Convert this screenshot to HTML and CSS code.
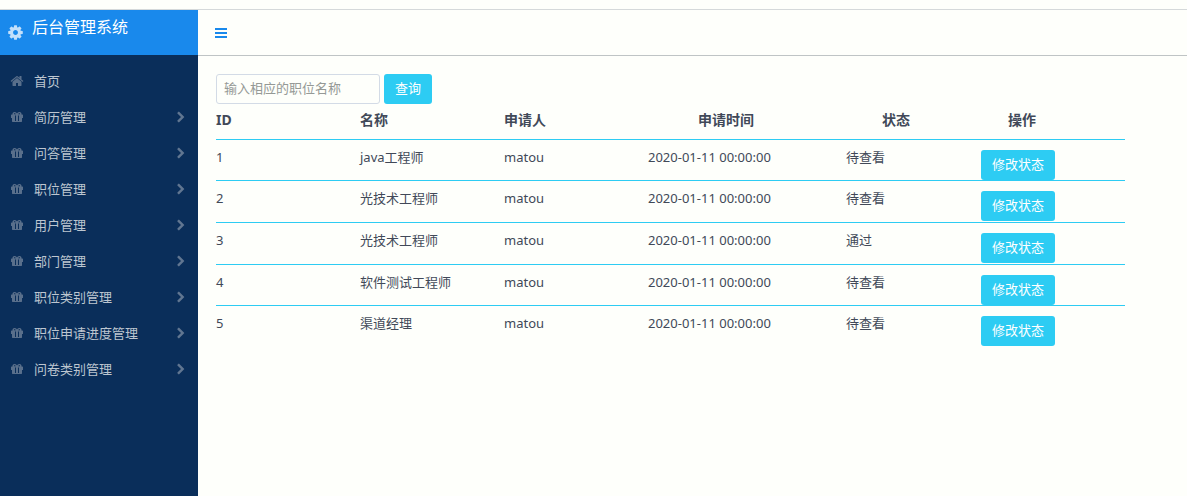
FILE: index.html
```html
<!DOCTYPE html>
<html lang="zh-CN">
<head>
<meta charset="utf-8">
<title>后台管理系统</title>
<link rel="stylesheet" href="styles.css">
</head>
<body>
<svg class="sprite" aria-hidden="true">
  <symbol id="cog" viewBox="0 0 1792 1792"><path d="M1152 896q0-106-75-181t-181-75-181 75-75 181 75 181 181 75 181-75 75-181zm512-109v222q0 12-8 23t-20 13l-185 28q-19 54-39 91 35 50 107 138 10 12 10 25t-9 23q-27 37-99 108t-94 71q-12 0-26-9l-138-108q-44 23-91 38-16 136-29 186-7 28-36 28h-222q-14 0-24.5-8.5t-11.5-21.5l-28-184q-49-16-90-37l-141 107q-10 9-25 9-14 0-25-11-126-114-165-168-7-10-7-23 0-12 8-23 15-21 51-66.5t54-70.5q-27-50-41-99l-183-27q-13-2-21-12.5t-8-23.5v-222q0-12 8-23t19-13l186-28q14-46 39-92-40-57-107-138-10-12-10-24 0-10 9-23 26-36 98.5-107.5t94.5-71.5q13 0 26 10l138 107q44-23 91-38 16-136 29-186 7-28 36-28h222q14 0 24.5 8.5t11.5 21.5l28 184q49 16 90 37l142-107q9-9 24-9 13 0 25 10 129 119 165 170 7 8 7 22 0 12-8 23-15 21-51 66.5t-54 70.5q26 50 41 98l183 28q13 2 21 12.5t8 23.5z"/></symbol>
  <symbol id="home" viewBox="0 0 1792 1792"><path d="M1472 992v480q0 26-19 45t-45 19h-384v-384h-256v384h-384q-26 0-45-19t-19-45v-480q0-1 .5-3t.5-3l575-474 575 474q1 2 1 6zm223-69l-62 74q-8 9-21 11h-3q-13 0-21-7l-692-577-692 577q-12 8-24 7-13-2-21-11l-62-74q-8-10-7-23.500t11-21.500l719-599q32-26 76-26t76 26l244 204v-195q0-14 9-23t23-9h192q14 0 23 9t9 23v408l219 182q10 8 11 21.500t-7 23.500z"/></symbol>
  <symbol id="gift" viewBox="0 0 14 14"><path fill-rule="evenodd" d="M4.500 2C5.500 2 6.300 2.500 7 3.500C7.700 2.500 8.500 2 9.500 2C11 2 11.700 3 11.500 4.500H12.500L13 5V8H12V11.500L11.500 12H2.500L2 11.500V8H1V5L1.500 4.500H2.500C2.300 3 3 2 4.500 2zM4 3.200V4.300H6L5 3.200zM10 3.200L9 3.200L8 4.300H10zM5 5.500V11H6V5.500zM8 5.500V11H9V5.500z"/></symbol>
  <symbol id="chevron" viewBox="0 0 1792 1792"><path d="M1363 877l-742 742q-19 19-45 19t-45-19l-166-166q-19-19-19-45t19-45l531-531-531-531q-19-19-19-45t19-45l166-166q19-19 45-19t45 19l742 742q19 19 19 45t-19 45z" transform="translate(0 64)"/></symbol>
  <symbol id="bars" viewBox="0 0 12 10"><path d="M0 0h12v2H0zM0 4h12v2H0zM0 8h12v2H0z"/></symbol>
</svg>
<div class="app">
  <aside class="sidebar">
    <div class="brand"><svg class="brand-icon"><use href="#cog"/></svg><span>后台管理系统</span></div>
    <nav class="menu">
      <a href="#"><svg class="icon"><use href="#home"/></svg><span>首页</span></a>
      <a href="#"><svg class="icon"><use href="#gift"/></svg><span>简历管理</span><svg class="arrow"><use href="#chevron"/></svg></a>
      <a href="#"><svg class="icon"><use href="#gift"/></svg><span>问答管理</span><svg class="arrow"><use href="#chevron"/></svg></a>
      <a href="#"><svg class="icon"><use href="#gift"/></svg><span>职位管理</span><svg class="arrow"><use href="#chevron"/></svg></a>
      <a href="#"><svg class="icon"><use href="#gift"/></svg><span>用户管理</span><svg class="arrow"><use href="#chevron"/></svg></a>
      <a href="#"><svg class="icon"><use href="#gift"/></svg><span>部门管理</span><svg class="arrow"><use href="#chevron"/></svg></a>
      <a href="#"><svg class="icon"><use href="#gift"/></svg><span>职位类别管理</span><svg class="arrow"><use href="#chevron"/></svg></a>
      <a href="#"><svg class="icon"><use href="#gift"/></svg><span>职位申请进度管理</span><svg class="arrow"><use href="#chevron"/></svg></a>
      <a href="#"><svg class="icon"><use href="#gift"/></svg><span>问卷类别管理</span><svg class="arrow"><use href="#chevron"/></svg></a>
    </nav>
  </aside>
  <div class="main">
    <header class="topbar"><button class="toggle" type="button" aria-label="切换菜单"><svg><use href="#bars"/></svg></button></header>
    <main class="content">
      <form class="search">
        <input type="text" placeholder="输入相应的职位名称" aria-label="职位名称">
        <button class="btn" type="button">查询</button>
      </form>
      <table class="list">
        <colgroup><col class="c-std"><col class="c-std"><col class="c-std"><col class="c-time"><col class="c-state"><col class="c-std"></colgroup>
        <thead><tr><th>ID</th><th>名称</th><th>申请人</th><th class="th-time">申请时间</th><th class="th-state">状态</th><th class="th-action">操作</th></tr></thead>
        <tbody>
          <tr><td>1</td><td>java工程师</td><td>matou</td><td>2020-01-11 00:00:00</td><td>待查看</td><td><button class="btn" type="button">修改状态</button></td></tr>
          <tr><td>2</td><td>光技术工程师</td><td>matou</td><td>2020-01-11 00:00:00</td><td>待查看</td><td><button class="btn" type="button">修改状态</button></td></tr>
          <tr><td>3</td><td>光技术工程师</td><td>matou</td><td>2020-01-11 00:00:00</td><td>通过</td><td><button class="btn" type="button">修改状态</button></td></tr>
          <tr><td>4</td><td>软件测试工程师</td><td>matou</td><td>2020-01-11 00:00:00</td><td>待查看</td><td><button class="btn" type="button">修改状态</button></td></tr>
          <tr><td>5</td><td>渠道经理</td><td>matou</td><td>2020-01-11 00:00:00</td><td>待查看</td><td><button class="btn" type="button">修改状态</button></td></tr>
        </tbody>
      </table>
    </main>
  </div>
</div>
</body>
</html>
```
FILE: styles.css
```css
* { box-sizing: border-box; }
body {
  margin: 0;
  padding-top: 9px;
  background: #fefffb;
  color: #414958;
  font: 13px/20px "Noto Sans", "Noto Sans CJK SC", sans-serif;
}
button, input { font: inherit; }
.sprite { display: none; }
svg { display: block; fill: currentColor; }
.app {
  display: flex;
  min-height: calc(100vh - 9px);
  border-top: 1px solid #d5d9da;
}
.sidebar { flex: 0 0 198px; background: #0a2e5a; }
.brand {
  display: flex;
  align-items: flex-start;
  gap: 8px;
  height: 45px;
  padding: 5px 7px;
  background: #1989ec;
  color: #fff;
  font-size: 16px;
  line-height: 24px;
}
.brand-icon { width: 17px; height: 17px; margin-top: 9px; color: #c3e0fb; }
.menu { padding-top: 8px; }
.menu a {
  display: flex;
  align-items: center;
  height: 36px;
  padding: 0 11px 0 10px;
  color: #bdc6d0;
  text-decoration: none;
}
.icon { width: 14px; height: 14px; margin-right: 10px; color: #596f8b; }
.arrow { width: 12px; height: 12px; margin-left: auto; color: #617691; }
.main { flex: 1; min-width: 0; }
.topbar {
  display: flex;
  align-items: center;
  height: 46px;
  padding: 0 17px;
  border-bottom: 1px solid #bfc4c5;
}
.toggle { padding: 0; border: 0; background: none; color: #1989ec; }
.toggle svg { width: 12px; height: 10px; }
.content { padding: 18px 62px 18px 18px; }
.search { display: flex; gap: 4px; }
.search input {
  width: 164px;
  height: 30px;
  padding: 0 7px 2px;
  border: 1px solid #d3dbe6;
  border-radius: 3px;
  background: #fefffb;
  color: inherit;
}
.search input::placeholder { color: #959996; }
.btn {
  display: block;
  height: 30px;
  padding: 0 11px 2px;
  border: 0;
  border-radius: 3px;
  background: #2dccf3;
  color: #fff;
  white-space: nowrap;
}
.list { width: 100%; border-collapse: separate; border-spacing: 0; table-layout: fixed; }
.c-std { width: 144px; }
.c-time { width: 198px; }
.c-state { width: 135px; }
th {
  height: 36px;
  padding: 6px 0 9px;
  font-size: 14px;
  text-align: left;
  vertical-align: top;
}
.th-time { padding-left: 50px; }
.th-state { padding-left: 36px; }
.th-action { padding-left: 27px; }
td { height: 42px; padding: 7px 0 0; vertical-align: top; }
tbody tr:nth-child(3n+1) td { height: 41px; }
td:last-child { padding-top: 10px; }
th, tr:not(:last-child) td { border-bottom: 1px solid #2dccf3; }
```
